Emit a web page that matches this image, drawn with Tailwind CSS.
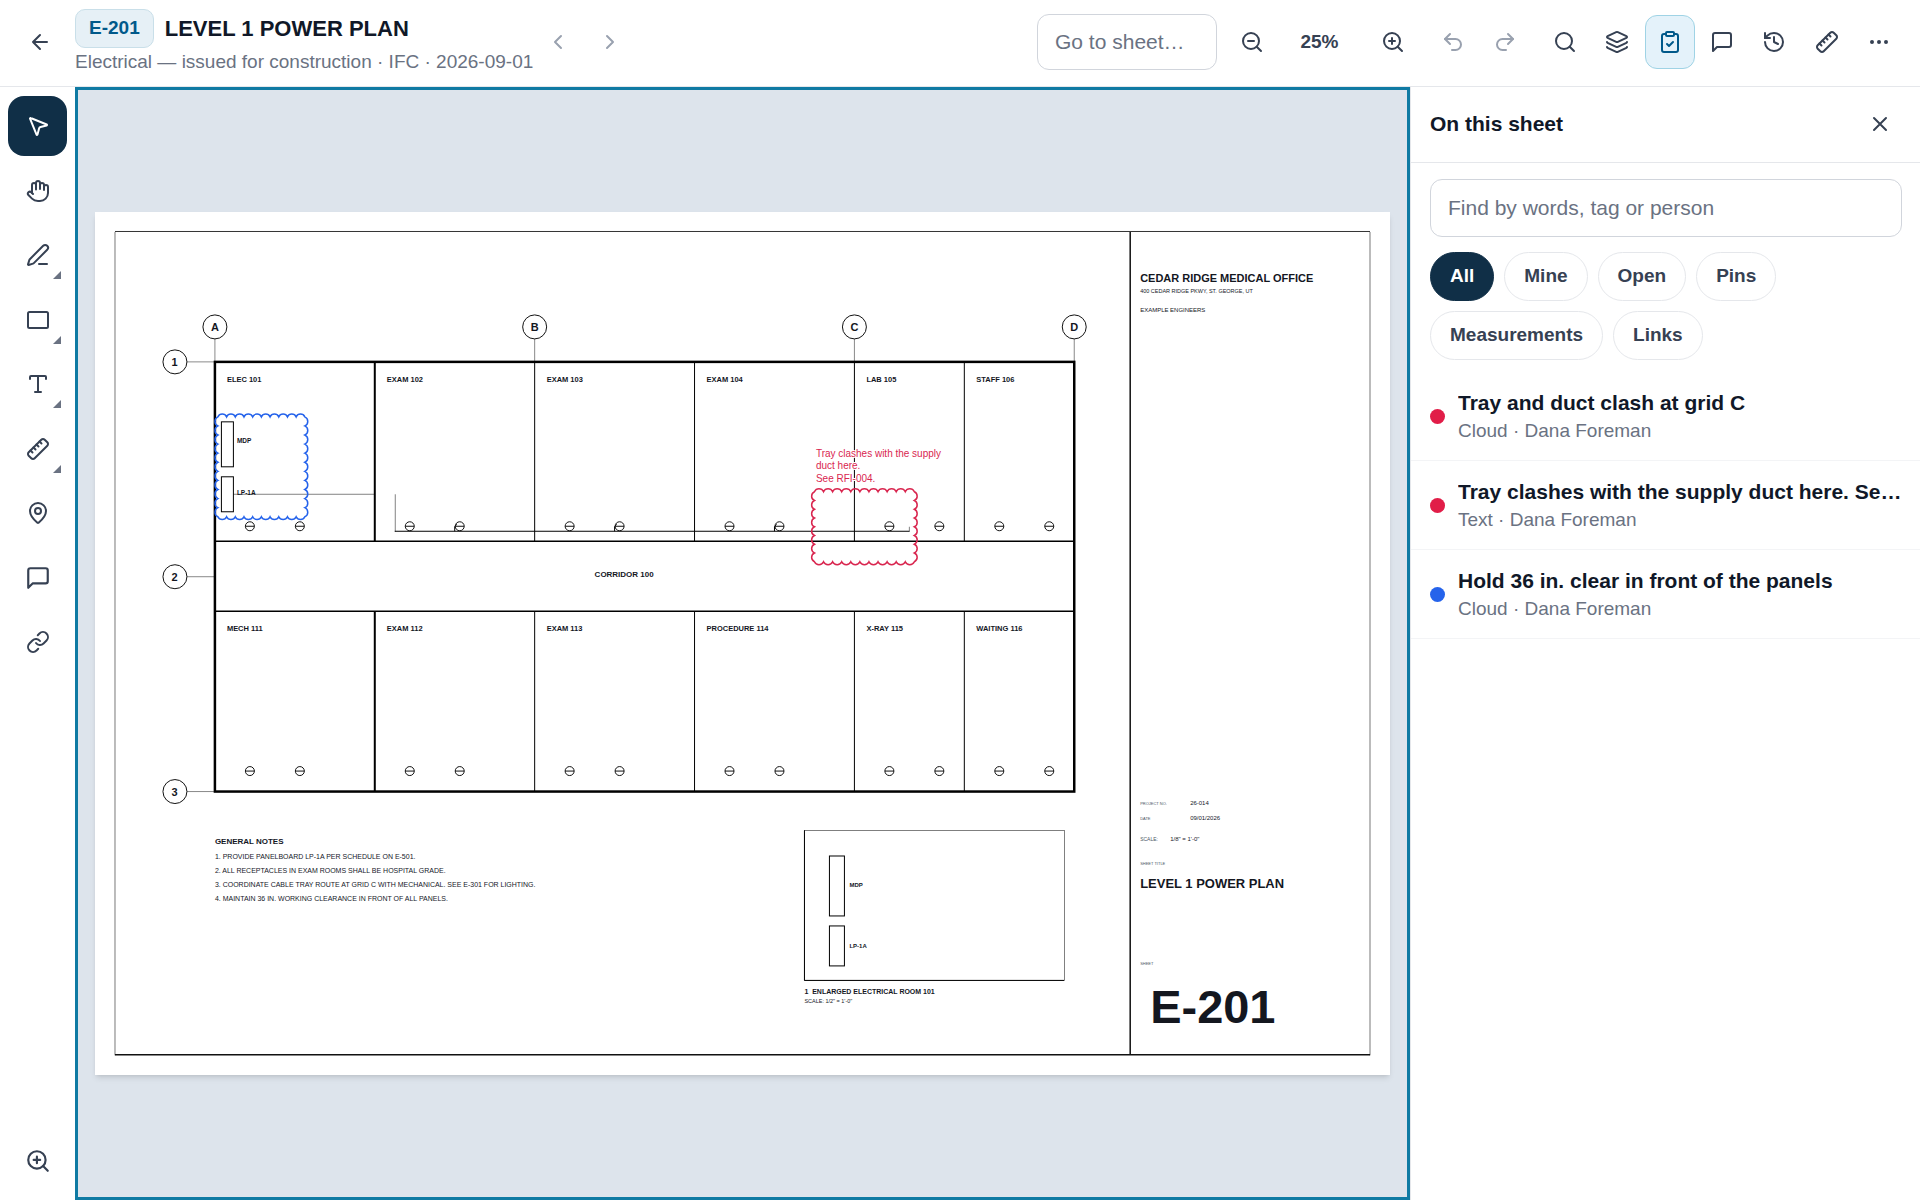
<!DOCTYPE html>
<html lang="en">
<head>
  <meta charset="UTF-8" />
  <meta name="viewport" content="width=device-width, initial-scale=1.0" />
  <title>E-201 LEVEL 1 POWER PLAN</title>
  <script src="https://cdn.jsdelivr.net/npm/@tailwindcss/browser@4"></script>
</head>
<body class="h-screen flex flex-col overflow-hidden bg-white text-gray-900 text-[19px] font-['Liberation_Sans',Arial,sans-serif]">

  <!-- icon sprite -->
  <svg class="hidden" aria-hidden="true">
    <symbol id="i-back" viewBox="0 0 24 24"><path d="m12 19-7-7 7-7M19 12H5"/></symbol>
    <symbol id="i-prev" viewBox="0 0 24 24"><path d="m15 18-6-6 6-6"/></symbol>
    <symbol id="i-next" viewBox="0 0 24 24"><path d="m9 18 6-6-6-6"/></symbol>
    <symbol id="i-search" viewBox="0 0 24 24"><circle cx="11" cy="11" r="8"/><path d="m21 21-4.3-4.3"/></symbol>
    <symbol id="i-zoom-in" viewBox="0 0 24 24"><circle cx="11" cy="11" r="8"/><path d="m21 21-4.3-4.3M11 8v6M8 11h6"/></symbol>
    <symbol id="i-zoom-out" viewBox="0 0 24 24"><circle cx="11" cy="11" r="8"/><path d="m21 21-4.3-4.3M8 11h6"/></symbol>
    <symbol id="i-undo" viewBox="0 0 24 24"><path d="M9 14 4 9l5-5"/><path d="M4 9h10.5a5.5 5.5 0 0 1 0 11H11"/></symbol>
    <symbol id="i-redo" viewBox="0 0 24 24"><path d="m15 14 5-5-5-5"/><path d="M20 9H9.5a5.5 5.5 0 0 0 0 11H13"/></symbol>
    <symbol id="i-layers" viewBox="0 0 24 24"><path d="M12.83 2.18a2 2 0 0 0-1.66 0L2.6 6.08a1 1 0 0 0 0 1.83l8.58 3.91a2 2 0 0 0 1.66 0l8.58-3.9a1 1 0 0 0 0-1.83z"/><path d="M2 12a1 1 0 0 0 .58.91l8.6 3.91a2 2 0 0 0 1.65 0l8.58-3.9A1 1 0 0 0 22 12"/><path d="M2 17a1 1 0 0 0 .58.91l8.6 3.91a2 2 0 0 0 1.65 0l8.58-3.9A1 1 0 0 0 22 17"/></symbol>
    <symbol id="i-clipboard" viewBox="0 0 24 24"><rect x="8" y="2" width="8" height="4" rx="1"/><path d="M16 4h2a2 2 0 0 1 2 2v14a2 2 0 0 1-2 2H6a2 2 0 0 1-2-2V6a2 2 0 0 1 2-2h2"/><path d="m9 14 2 2 4-4"/></symbol>
    <symbol id="i-comment" viewBox="0 0 24 24"><path d="M21 15a2 2 0 0 1-2 2H7l-4 4V5a2 2 0 0 1 2-2h14a2 2 0 0 1 2 2z"/></symbol>
    <symbol id="i-history" viewBox="0 0 24 24"><path d="M3 12a9 9 0 1 0 9-9 9.75 9.75 0 0 0-6.74 2.74L3 8"/><path d="M3 3v5h5M12 7v5l4 2"/></symbol>
    <symbol id="i-ruler" viewBox="0 0 24 24"><path d="M2.7 15.3a2.4 2.4 0 0 0 0 3.4l2.6 2.6a2.4 2.4 0 0 0 3.4 0L21.3 8.7a2.4 2.4 0 0 0 0-3.4l-2.6-2.6a2.4 2.4 0 0 0-3.4 0Z"/><path d="m9.5 12.5-2-2M12.5 9.5l-2-2M15.5 6.5l-2-2M6.5 15.5l-2-2"/></symbol>
    <symbol id="i-more" viewBox="0 0 24 24"><circle cx="5" cy="12" r="1"/><circle cx="12" cy="12" r="1"/><circle cx="19" cy="12" r="1"/></symbol>
    <symbol id="i-close" viewBox="0 0 24 24"><path d="M18 6 6 18M6 6l12 12"/></symbol>
    <symbol id="i-pointer" viewBox="0 0 24 24"><path d="M4.037 4.688a.495.495 0 0 1 .651-.651l16 6.5a.5.5 0 0 1-.063.947l-6.124 1.58a2 2 0 0 0-1.438 1.435l-1.579 6.126a.5.5 0 0 1-.947.063z"/></symbol>
    <symbol id="i-hand" viewBox="0 0 24 24"><path d="M18 11V6a2 2 0 0 0-4 0M14 10V4a2 2 0 0 0-4 0v2M10 10.500V6a2 2 0 0 0-4 0v8"/><path d="M18 8a2 2 0 1 1 4 0v6a8 8 0 0 1-8 8h-2c-2.800 0-4.500-.86-5.990-2.340l-3.600-3.600a2 2 0 0 1 2.830-2.820L7 15"/></symbol>
    <symbol id="i-pen" viewBox="0 0 24 24"><path d="M13 21h8"/><path d="M21.174 6.812a1 1 0 0 0-3.986-3.987L3.842 16.174a2 2 0 0 0-.5.83l-1.321 4.352a.5.5 0 0 0 .623.622l4.353-1.32a2 2 0 0 0 .83-.497z"/></symbol>
    <symbol id="i-rect" viewBox="0 0 24 24"><rect x="2" y="4" width="20" height="16" rx="1.500"/></symbol>
    <symbol id="i-text" viewBox="0 0 24 24"><path d="M12 4v16M4 7V5a1 1 0 0 1 1-1h14a1 1 0 0 1 1 1v2M9 20h6"/></symbol>
    <symbol id="i-pin" viewBox="0 0 24 24"><path d="M20 10c0 4.993-5.539 10.193-7.399 11.799a1 1 0 0 1-1.202 0C9.539 20.193 4 14.993 4 10a8 8 0 0 1 16 0"/><circle cx="12" cy="10" r="3"/></symbol>
    <symbol id="i-link" viewBox="0 0 24 24"><path d="M10 13a5 5 0 0 0 7.540.54l3-3a5 5 0 0 0-7.070-7.070l-1.720 1.710"/><path d="M14 11a5 5 0 0 0-7.540-.54l-3 3a5 5 0 0 0 7.070 7.070l1.710-1.710"/></symbol>
  </svg>

  <header class="h-[87px] shrink-0 flex items-center gap-2.5 pl-[15px] pr-4 pb-0.5 border-b border-gray-200 text-gray-700">
    <button aria-label="Back" class="w-[50px] h-[54px] shrink-0 grid place-items-center"><svg class="size-6 fill-none stroke-current stroke-2" stroke-linecap="round" stroke-linejoin="round"><use href="#i-back"/></svg></button>
    <div class="w-[448px]">
      <div class="flex items-center gap-[11px]">
        <span class="h-[39px] px-[13px] flex items-center rounded-[10px] border border-[#c9dfe9] bg-[#e6f0f6] font-bold text-sky-800">E-201</span>
        <h1 class="text-[22px] font-bold text-gray-900 whitespace-nowrap">LEVEL 1 POWER PLAN</h1>
      </div>
      <p class="leading-[27px] text-gray-500 whitespace-nowrap">Electrical — issued for construction · IFC · 2026-09-01</p>
    </div>
    <nav class="flex gap-0.5 text-gray-400" aria-label="Sheets">
      <button aria-label="Previous sheet" class="w-[50px] h-[54px] grid place-items-center"><svg class="size-6 fill-none stroke-current stroke-2" stroke-linecap="round" stroke-linejoin="round"><use href="#i-prev"/></svg></button>
      <button aria-label="Next sheet" class="w-[50px] h-[54px] grid place-items-center"><svg class="size-6 fill-none stroke-current stroke-2" stroke-linecap="round" stroke-linejoin="round"><use href="#i-next"/></svg></button>
    </nav>

    <input type="text" aria-label="Go to sheet" placeholder="Go to sheet…" class="ml-auto w-[180px] h-14 px-[17px] rounded-xl border border-gray-300 text-[21px] placeholder:text-gray-500" />
    <div class="flex items-center">
      <button aria-label="Zoom out" class="w-[50px] h-[54px] grid place-items-center"><svg class="size-6 fill-none stroke-current stroke-2" stroke-linecap="round" stroke-linejoin="round"><use href="#i-zoom-out"/></svg></button>
      <button aria-label="Zoom level" class="w-[91px] h-[54px] pr-1.5 font-bold">25%</button>
      <button aria-label="Zoom in" class="w-[50px] h-[54px] grid place-items-center"><svg class="size-6 fill-none stroke-current stroke-2" stroke-linecap="round" stroke-linejoin="round"><use href="#i-zoom-in"/></svg></button>
    </div>
    <div class="flex gap-0.5 text-gray-400">
      <button aria-label="Undo" class="w-[50px] h-[54px] grid place-items-center"><svg class="size-6 fill-none stroke-current stroke-2" stroke-linecap="round" stroke-linejoin="round"><use href="#i-undo"/></svg></button>
      <button aria-label="Redo" class="w-[50px] h-[54px] grid place-items-center"><svg class="size-6 fill-none stroke-current stroke-2" stroke-linecap="round" stroke-linejoin="round"><use href="#i-redo"/></svg></button>
    </div>
    <div class="w-[364px] shrink-0 flex justify-between">
      <button aria-label="Search" class="w-[50px] h-[54px] grid place-items-center"><svg class="size-6 fill-none stroke-current stroke-2" stroke-linecap="round" stroke-linejoin="round"><use href="#i-search"/></svg></button>
      <button aria-label="Layers" class="w-[50px] h-[54px] grid place-items-center"><svg class="size-6 fill-none stroke-current stroke-2" stroke-linecap="round" stroke-linejoin="round"><use href="#i-layers"/></svg></button>
      <button aria-label="On this sheet" aria-pressed="true" class="w-[50px] h-[54px] grid place-items-center rounded-xl border border-[#9fd3e5] bg-[#e4f2fa] text-sky-800"><svg class="size-6 fill-none stroke-current stroke-2" stroke-linecap="round" stroke-linejoin="round"><use href="#i-clipboard"/></svg></button>
      <button aria-label="Comments" class="w-[50px] h-[54px] grid place-items-center"><svg class="size-6 fill-none stroke-current stroke-2" stroke-linecap="round" stroke-linejoin="round"><use href="#i-comment"/></svg></button>
      <button aria-label="History" class="w-[50px] h-[54px] grid place-items-center"><svg class="size-6 fill-none stroke-current stroke-2" stroke-linecap="round" stroke-linejoin="round"><use href="#i-history"/></svg></button>
      <button aria-label="Calibrate" class="w-[50px] h-[54px] grid place-items-center"><svg class="size-6 fill-none stroke-current stroke-2" stroke-linecap="round" stroke-linejoin="round"><use href="#i-ruler"/></svg></button>
      <button aria-label="More" class="w-[50px] h-[54px] grid place-items-center"><svg class="size-6 fill-none stroke-current stroke-2" stroke-linecap="round" stroke-linejoin="round"><use href="#i-more"/></svg></button>
    </div>
  </header>

  <div class="flex-1 min-h-0 flex">
    <!-- tools -->
    <aside class="w-[75px] shrink-0 flex flex-col justify-between items-center pt-[9px] pb-[9px] text-gray-700">
      <div class="h-[576px] flex flex-col justify-between">
        <button aria-label="Select" aria-pressed="true" class="w-[59px] h-[60px] grid place-items-center rounded-2xl bg-[#102f47] text-white"><svg class="size-6 fill-none stroke-current stroke-2" stroke-linecap="round" stroke-linejoin="round"><use href="#i-pointer"/></svg></button>
        <button aria-label="Pan" class="w-[59px] h-[60px] grid place-items-center"><svg class="size-6 fill-none stroke-current stroke-2" stroke-linecap="round" stroke-linejoin="round"><use href="#i-hand"/></svg></button>
        <button aria-label="Draw" class="relative w-[59px] h-[60px] grid place-items-center"><svg class="size-6 fill-none stroke-current stroke-2" stroke-linecap="round" stroke-linejoin="round"><use href="#i-pen"/></svg><svg viewBox="0 0 8 8" class="absolute right-1.5 bottom-1.5 size-2 fill-gray-500"><path d="M8 0v8H0z"/></svg></button>
        <button aria-label="Shapes" class="relative w-[59px] h-[60px] grid place-items-center"><svg class="size-6 fill-none stroke-current stroke-2" stroke-linecap="round" stroke-linejoin="round"><use href="#i-rect"/></svg><svg viewBox="0 0 8 8" class="absolute right-1.5 bottom-1.5 size-2 fill-gray-500"><path d="M8 0v8H0z"/></svg></button>
        <button aria-label="Text" class="relative w-[59px] h-[60px] grid place-items-center"><svg class="size-6 fill-none stroke-current stroke-2" stroke-linecap="round" stroke-linejoin="round"><use href="#i-text"/></svg><svg viewBox="0 0 8 8" class="absolute right-1.5 bottom-1.5 size-2 fill-gray-500"><path d="M8 0v8H0z"/></svg></button>
        <button aria-label="Measure" class="relative w-[59px] h-[60px] grid place-items-center"><svg class="size-6 fill-none stroke-current stroke-2" stroke-linecap="round" stroke-linejoin="round"><use href="#i-ruler"/></svg><svg viewBox="0 0 8 8" class="absolute right-1.5 bottom-1.5 size-2 fill-gray-500"><path d="M8 0v8H0z"/></svg></button>
        <button aria-label="Pin" class="w-[59px] h-[60px] grid place-items-center"><svg class="size-6 fill-none stroke-current stroke-2" stroke-linecap="round" stroke-linejoin="round"><use href="#i-pin"/></svg></button>
        <button aria-label="Comment" class="w-[59px] h-[60px] grid place-items-center"><svg class="size-[26px] fill-none stroke-current stroke-2" stroke-linecap="round" stroke-linejoin="round"><use href="#i-comment"/></svg></button>
        <button aria-label="Link" class="w-[59px] h-[60px] grid place-items-center"><svg class="size-6 fill-none stroke-current stroke-2" stroke-linecap="round" stroke-linejoin="round"><use href="#i-link"/></svg></button>
      </div>
      <button aria-label="Zoom to area" class="w-[59px] h-[60px] grid place-items-center"><svg class="size-[26px] fill-none stroke-current stroke-2" stroke-linecap="round" stroke-linejoin="round"><use href="#i-zoom-in"/></svg></button>
    </aside>

    <!-- sheet, drawn in points: 36in x 24in -->
    <main class="flex-1 min-w-0 flex items-center px-[17px] border-3 border-[#0f7aa3] bg-[#dde4ec]">
      <svg id="sheet" viewBox="0 0 2592 1728" class="w-full bg-white shadow-md font-['Liberation_Sans',Arial,sans-serif]" fill="#14171f">
        <g fill="none" stroke="#111">
          <path d="M40 40V1688M2552 40V1688" stroke="#777" stroke-width="2"/>
          <path d="M40 39H2552" stroke="#333" stroke-width="2"/>
          <path d="M40 1687H2552M2072 40V1688" stroke-width="3"/>
        </g>

        <!-- grid bubbles -->
        <g fill="none" stroke="#111" stroke-width="1">
          <path d="M240 254V300M880 254V300M1520 254V300M1960 254V300M184 300H240M184 730H240M184 1160H240"/>
          <g stroke-width="2">
            <circle cx="240" cy="230" r="24"/><circle cx="880" cy="230" r="24"/><circle cx="1520" cy="230" r="24"/><circle cx="1960" cy="230" r="24"/>
            <circle cx="160" cy="300" r="24"/><circle cx="160" cy="730" r="24"/><circle cx="160" cy="1160" r="24"/>
          </g>
        </g>
        <g font-size="22" font-weight="bold" text-anchor="middle">
          <text x="240" y="238">A</text><text x="880" y="238">B</text><text x="1520" y="238">C</text><text x="1960" y="238">D</text>
          <text x="159" y="308">1</text><text x="159" y="738">2</text><text x="159" y="1168">3</text>
        </g>

        <!-- walls -->
        <g fill="none" stroke="#000">
          <rect x="240" y="300" width="1720" height="860" stroke-width="5"/>
          <path d="M240 659H1960M240 799H1960" stroke-width="3"/>
          <path d="M560 300V660M560 800V1160" stroke-width="4"/>
          <path d="M880 300V660M1200 300V660M1520 300V660M1740 300V660M880 800V1160M1200 800V1160M1520 800V1160M1740 800V1160" stroke-width="2"/>
        </g>
        <g font-size="15" font-weight="bold">
          <text x="264" y="340">ELEC 101</text><text x="584" y="340">EXAM 102</text><text x="904" y="340">EXAM 103</text>
          <text x="1224" y="340">EXAM 104</text><text x="1544" y="340">LAB 105</text><text x="1764" y="340">STAFF 106</text>
          <text x="264" y="839">MECH 111</text><text x="584" y="839">EXAM 112</text><text x="904" y="839">EXAM 113</text>
          <text x="1224" y="839">PROCEDURE 114</text><text x="1544" y="839">X-RAY 115</text><text x="1764" y="839">WAITING 116</text>
          <text x="1000" y="731" font-size="16">CORRIDOR 100</text>
        </g>

        <!-- panels and home run -->
        <g fill="none" stroke="#000" stroke-width="2">
          <rect x="253" y="420" width="24" height="90"/><rect x="253" y="530" width="24" height="70"/>
          <path d="M277 565H560M601 565V640" stroke-width="1"/>
          <path d="M600 639H1630M720 639V630L724 625M1040 639V630L1044 625M1360 639V630L1364 625"/>
          <path d="M1630 640V630" stroke-width="1"/>
        </g>
        <g font-size="13" font-weight="bold">
          <text x="284" y="462">MDP</text><text x="284" y="567">LP-1A</text>
        </g>
        <g id="receptacles" fill="none" stroke="#111" stroke-width="2"></g>

        <!-- notes -->
        <text x="240" y="1264" font-size="16" font-weight="bold">GENERAL NOTES</text>
        <g font-size="14">
          <text x="240" y="1296">1. PROVIDE PANELBOARD LP-1A PER SCHEDULE ON E-501.</text>
          <text x="240" y="1324">2. ALL RECEPTACLES IN EXAM ROOMS SHALL BE HOSPITAL GRADE.</text>
          <text x="240" y="1352">3. COORDINATE CABLE TRAY ROUTE AT GRID C WITH MECHANICAL. SEE E-301 FOR LIGHTING.</text>
          <text x="240" y="1380">4. MAINTAIN 36 IN. WORKING CLEARANCE IN FRONT OF ALL PANELS.</text>
        </g>

        <!-- enlarged room -->
        <g fill="none" stroke="#000">
          <rect x="1420" y="1238" width="520" height="300" stroke-width="1"/>
          <path d="M1420 1238V1538H1940" stroke-width="2"/>
          <rect x="1470" y="1289" width="30" height="120" stroke-width="2"/>
          <rect x="1470" y="1429" width="30" height="80" stroke-width="2"/>
        </g>
        <g font-size="12" font-weight="bold">
          <text x="1510" y="1351">MDP</text><text x="1510" y="1473">LP-1A</text>
          <text x="1420" y="1565" font-size="14" xml:space="preserve">1  ENLARGED ELECTRICAL ROOM 101</text>
        </g>
        <text x="1420" y="1583" font-size="11">SCALE: 1/2" = 1'-0"</text>

        <!-- title block -->
        <text x="2092" y="141" font-size="22" font-weight="bold">CEDAR RIDGE MEDICAL OFFICE</text>
        <text x="2092" y="162" font-size="11">400 CEDAR RIDGE PKWY, ST. GEORGE, UT</text>
        <text x="2092" y="201" font-size="12">EXAMPLE ENGINEERS</text>
        <g font-size="8" fill="#4b5563">
          <text x="2092" y="1187">PROJECT NO.</text><text x="2092" y="1217">DATE</text>
          <text x="2092" y="1258" font-size="10">SCALE:</text>
          <text x="2092" y="1307">SHEET TITLE</text><text x="2092" y="1507">SHEET</text>
        </g>
        <g font-size="12">
          <text x="2192" y="1186">26-014</text><text x="2192" y="1216">09/01/2026</text><text x="2152" y="1258">1/8" = 1'-0"</text>
        </g>
        <text x="2092" y="1354" font-size="26" font-weight="bold">LEVEL 1 POWER PLAN</text>
        <text x="2112" y="1624" font-size="94" font-weight="bold">E-201</text>

        <!-- markups -->
        <g id="clouds" fill="none" stroke-width="3"></g>
        <text font-size="20" fill="#d9264f" stroke="#fff" stroke-width="4" paint-order="stroke">
          <tspan x="1443" y="490">Tray clashes with the supply</tspan>
          <tspan x="1443" y="515">duct here.</tspan>
          <tspan x="1443" y="541">See RFI-004.</tspan>
        </text>
      </svg>
    </main>

    <!-- markup list -->
    <section class="w-[510px] shrink-0 border-l border-gray-200" aria-label="On this sheet">
      <div class="h-[76px] flex items-center justify-between pl-[19px] pr-[15px] pb-0.5 border-b border-gray-200">
        <h2 class="text-[21px] font-bold">On this sheet</h2>
        <button aria-label="Close" class="w-[50px] h-[54px] grid place-items-center text-gray-700"><svg class="size-6 fill-none stroke-current stroke-2" stroke-linecap="round" stroke-linejoin="round"><use href="#i-close"/></svg></button>
      </div>
      <div class="pl-[19px] pr-[18px] pt-4 pb-3">
        <input type="search" aria-label="Find markups" placeholder="Find by words, tag or person" class="block w-full h-[58px] px-[17px] rounded-xl border border-gray-300 text-[21px] placeholder:text-gray-500" />
        <div class="mt-[15px] flex flex-wrap gap-2.5 font-bold text-gray-700">
          <button class="h-[49px] px-[19px] rounded-full border border-[#102f47] bg-[#102f47] text-white">All</button>
          <button class="h-[49px] px-[19px] rounded-full border border-gray-200">Mine</button>
          <button class="h-[49px] px-[19px] rounded-full border border-gray-200">Open</button>
          <button class="h-[49px] px-[19px] rounded-full border border-gray-200">Pins</button>
          <button class="h-[49px] px-[19px] rounded-full border border-gray-200">Measurements</button>
          <button class="h-[49px] px-[19px] rounded-full border border-gray-200">Links</button>
        </div>
      </div>
      <ul>
        <li class="flex items-center gap-[13px] pl-[19px] pr-3.5 py-4 border-b border-gray-100">
          <span class="size-[15px] shrink-0 rounded-full bg-[#e11d48]"></span>
          <div class="min-w-0">
            <p class="truncate text-[21px] leading-[30px] font-bold">Tray and duct clash at grid C</p>
            <p class="leading-[26px] text-gray-500">Cloud · Dana Foreman</p>
          </div>
        </li>
        <li class="flex items-center gap-[13px] pl-[19px] pr-3.5 py-4 border-b border-gray-100">
          <span class="size-[15px] shrink-0 rounded-full bg-[#e11d48]"></span>
          <div class="min-w-0">
            <p class="truncate text-[21px] leading-[30px] font-bold">Tray clashes with the supply duct here. See RFI-004.</p>
            <p class="leading-[26px] text-gray-500">Text · Dana Foreman</p>
          </div>
        </li>
        <li class="flex items-center gap-[13px] pl-[19px] pr-3.5 py-4 border-b border-gray-100">
          <span class="size-[15px] shrink-0 rounded-full bg-[#2563eb]"></span>
          <div class="min-w-0">
            <p class="truncate text-[21px] leading-[30px] font-bold">Hold 36 in. clear in front of the panels</p>
            <p class="leading-[26px] text-gray-500">Cloud · Dana Foreman</p>
          </div>
        </li>
      </ul>
    </section>
  </div>

  <script>
    // duplex receptacles: two per room, along the corridor and the south wall
    const rooms = [240, 560, 880, 1200, 1520, 1740];
    let marks = "";
    [629, 1119].forEach(y => {
      rooms.forEach(left => {
        [left + 70, left + 170].forEach(x => {
          marks += `<circle cx="${x}" cy="${y}" r="9"/><path d="M${x - 9} ${y}h18"/>`;
        });
      });
    });
    document.getElementById("receptacles").innerHTML = marks;

    // revision cloud: arcs of about 18pt that bulge outwards, clockwise
    const cloud = (x, y, w, h, color) => {
      const nx = Math.round(w / 18), ny = Math.round(h / 18);
      const sx = w / nx, sy = h / ny;
      const side = (n, dx, dy) => {
        const r = (Math.abs(dx + dy) * 0.55).toFixed(2);
        return `a${r} ${r} 0 0 1 ${dx} ${dy}`.repeat(n);
      };
      return `<path stroke="${color}" d="M${x} ${y}${side(nx, sx, 0)}${side(ny, 0, sy)}${side(nx, -sx, 0)}${side(ny, 0, -sy)}z"/>`;
    };
    document.getElementById("clouds").innerHTML =
      cloud(246, 410, 174, 200, "#2563eb") + cloud(1440, 560, 200, 140, "#d9264f");
  </script>
</body>
</html>
